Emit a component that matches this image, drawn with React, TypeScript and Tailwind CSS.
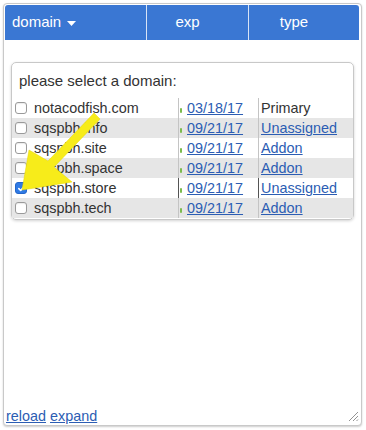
import React from "react";

const rows = [
  { name: "notacodfish.com", date: "03/18/17", type: "Primary", link: false, checked: false },
  { name: "sqspbh.info", date: "09/21/17", type: "Unassigned", link: true, checked: false },
  { name: "sqspbh.site", date: "09/21/17", type: "Addon", link: true, checked: false },
  { name: "sqspbh.space", date: "09/21/17", type: "Addon", link: true, checked: false },
  { name: "sqspbh.store", date: "09/21/17", type: "Unassigned", link: true, checked: true },
  { name: "sqspbh.tech", date: "09/21/17", type: "Addon", link: true, checked: false },
];

function Checkbox({ checked }: { checked: boolean }) {
  if (checked) {
    return (
      <div className="w-[12px] h-[12px] rounded-[3px] bg-[#2f7ae5] border border-[#2466c9] flex items-center justify-center">
        <svg width="9" height="9" viewBox="0 0 9 9">
          <path d="M1.8 4.6 L3.7 6.5 L7.3 2.3" stroke="white" strokeWidth="1.6" fill="none" strokeLinecap="round" strokeLinejoin="round" />
        </svg>
      </div>
    );
  }
  return <div className="w-[12px] h-[12px] rounded-[3px] bg-white border border-[#9a9a9a] shadow-[inset_0_1px_1px_rgba(0,0,0,0.08)]" />;
}

export default function App() {
  return (
    <div className="relative w-[366px] h-[430px] bg-white pt-[3px] pl-[3px]" style={{ fontFamily: '"Liberation Sans", Arial, sans-serif' }}>
      <div className="relative w-[359px] h-[423px] border border-[#c9c9c9] rounded-[4px] shadow-[0_1px_2px_rgba(0,0,0,0.2)] bg-white p-px flex flex-col">
        {/* header */}
        <div className="h-[35px] bg-[#3a77d3] rounded-t-[3px] flex text-white text-[15px] mr-px">
          <div className="w-[142px] border-r border-white/80 flex items-center pl-[7px] gap-[6px]">
            <span>domain</span>
            <svg width="9" height="5" viewBox="0 0 9 5" className="mt-[1px]">
              <path d="M0 0 H9 L4.5 5 Z" fill="white" />
            </svg>
          </div>
          <div className="w-[102px] border-r border-white/80 flex items-center justify-center pr-[20px]">exp</div>
          <div className="flex-1 flex items-center justify-center pr-[20px]">type</div>
        </div>

        {/* inner box */}
        <div className="mt-[22px] mx-[6px] border border-[#c8c8c8] rounded-[5px] shadow-[0_1px_3px_rgba(0,0,0,0.18)] pb-px text-[#333]">
          <div className="h-[35px] pt-[9px] pl-[7px] text-[15px] leading-[18px]">please select a domain:</div>
          {rows.map((r, i) => (
            <div key={r.name} className={`h-[20px] flex text-[14.4px] leading-[20px] ${i % 2 === 1 ? "bg-[#e6e6e6]" : "bg-white"}`}>
              <div className={`w-[167px] border-r ${r.checked ? "border-[#555]" : "border-[#c4c4c4]"} flex items-center pl-[3px] gap-[7px]`}>
                <Checkbox checked={r.checked} />
                <span>{r.name}</span>
              </div>
              <div className={`w-[80px] border-r ${r.checked ? "border-[#555]" : "border-[#c4c4c4]"} flex items-center pl-[1px] gap-[5px]`}>
                <div className="w-[2px] h-[5px] rounded-full bg-[#7dbb4e] mt-[4px]" />
                <span className="text-[#2c5db3] underline">{r.date}</span>
              </div>
              <div className="flex-1 flex items-center pl-[2px]">
                <span className={r.link ? "text-[#2c5db3] underline" : ""}>{r.type}</span>
              </div>
            </div>
          ))}
        </div>

        <div className="flex-1" />
        <div className="text-[14.4px] leading-[16px] text-[#2c5db3] flex gap-[4px] pl-px">
          <span className="underline">reload</span>
          <span className="underline">expand</span>
        </div>

        <svg className="absolute right-[2px] bottom-[3px]" width="12" height="12" viewBox="0 0 12 12">
          <path d="M11 2 L2 11 M11 6 L6 11 M11 9.5 L9.5 11" stroke="#888" strokeWidth="0.9" />
        </svg>
      </div>

      {/* annotation arrow */}
      <svg className="absolute left-0 top-0 pointer-events-none" width="366" height="430" viewBox="0 0 366 430">
        <polygon
          points="100,119 94,113 48,161 29,150 22,190 72,182 54,167"
          fill="#f7ec1a"
          stroke="#e6d800"
          strokeWidth="0.5"
          strokeLinejoin="round"
        />
      </svg>
    </div>
  );
}
